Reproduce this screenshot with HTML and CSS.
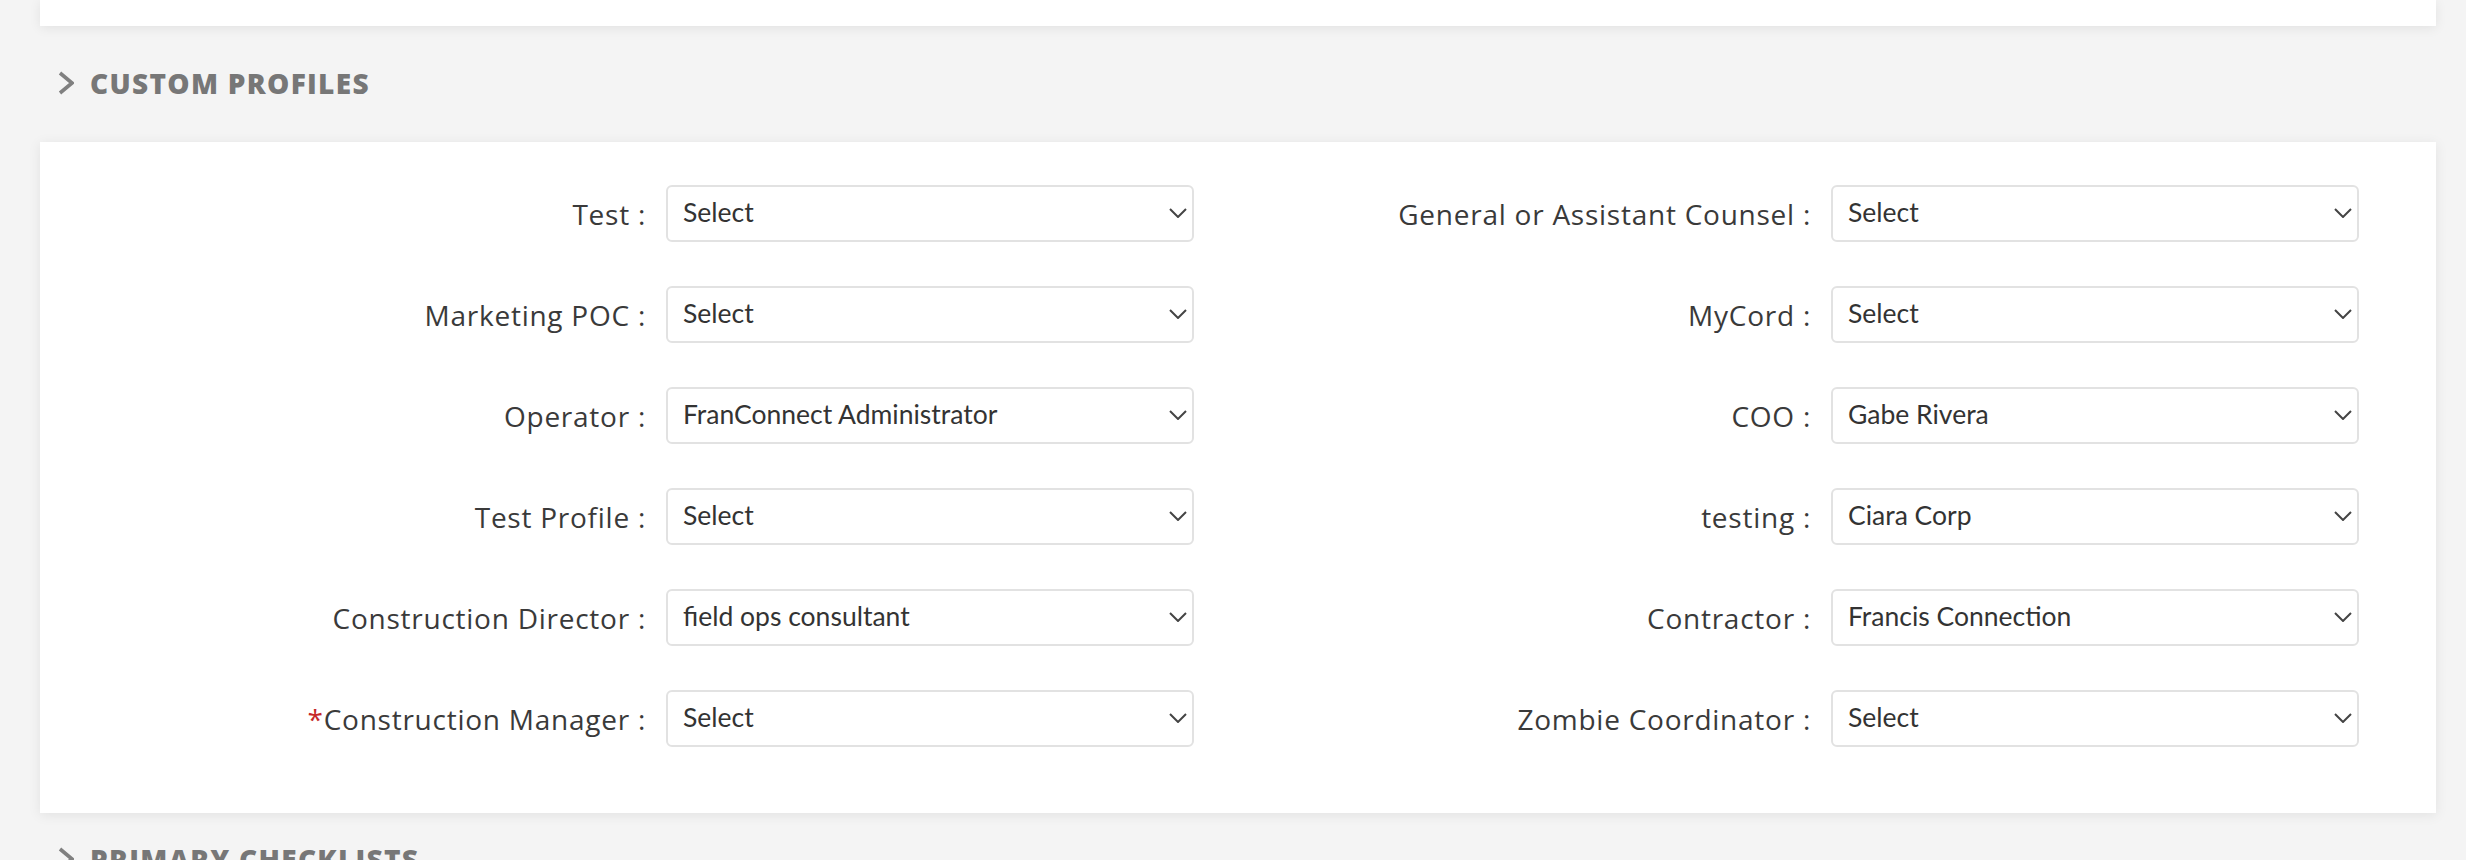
FILE: index.html
```html
<!DOCTYPE html>
<html>

<head>
    <title>Custom Profiles</title>
    <link rel="stylesheet" href="styles.css">
</head>

<body>
    <div class="card card-top"></div>

    <div class="section-head first">
        <svg class="head-chevron" width="16" height="24" viewBox="0 0 16 24">
            <polyline points="2,2 14,12 2,22" fill="none" stroke="#808080" stroke-width="3.6" />
        </svg>
        <span>CUSTOM PROFILES</span>
    </div>

    <div class="card">
        <form class="profile-grid">
            <div class="field">
                <label for="test">Test :</label>
                <div class="select-wrap">
                    <select id="test"><option>Select</option></select>
                    <svg class="caret" width="18" height="10" viewBox="0 0 18 10"><polyline points="1,1 9,9 17,1" fill="none" stroke="#444" stroke-width="2" /></svg>
                </div>
            </div>
            <div class="field">
                <label for="counsel">General or Assistant Counsel :</label>
                <div class="select-wrap">
                    <select id="counsel"><option>Select</option></select>
                    <svg class="caret" width="18" height="10" viewBox="0 0 18 10"><polyline points="1,1 9,9 17,1" fill="none" stroke="#444" stroke-width="2" /></svg>
                </div>
            </div>

            <div class="field">
                <label for="marketingPoc">Marketing POC :</label>
                <div class="select-wrap">
                    <select id="marketingPoc"><option>Select</option></select>
                    <svg class="caret" width="18" height="10" viewBox="0 0 18 10"><polyline points="1,1 9,9 17,1" fill="none" stroke="#444" stroke-width="2" /></svg>
                </div>
            </div>
            <div class="field">
                <label for="myCord">MyCord :</label>
                <div class="select-wrap">
                    <select id="myCord"><option>Select</option></select>
                    <svg class="caret" width="18" height="10" viewBox="0 0 18 10"><polyline points="1,1 9,9 17,1" fill="none" stroke="#444" stroke-width="2" /></svg>
                </div>
            </div>

            <div class="field">
                <label for="operator">Operator :</label>
                <div class="select-wrap">
                    <select id="operator"><option>FranConnect Administrator</option></select>
                    <svg class="caret" width="18" height="10" viewBox="0 0 18 10"><polyline points="1,1 9,9 17,1" fill="none" stroke="#444" stroke-width="2" /></svg>
                </div>
            </div>
            <div class="field">
                <label for="coo">COO :</label>
                <div class="select-wrap">
                    <select id="coo"><option>Gabe Rivera</option></select>
                    <svg class="caret" width="18" height="10" viewBox="0 0 18 10"><polyline points="1,1 9,9 17,1" fill="none" stroke="#444" stroke-width="2" /></svg>
                </div>
            </div>

            <div class="field">
                <label for="testProfile">Test Profile :</label>
                <div class="select-wrap">
                    <select id="testProfile"><option>Select</option></select>
                    <svg class="caret" width="18" height="10" viewBox="0 0 18 10"><polyline points="1,1 9,9 17,1" fill="none" stroke="#444" stroke-width="2" /></svg>
                </div>
            </div>
            <div class="field">
                <label for="testing">testing :</label>
                <div class="select-wrap">
                    <select id="testing"><option>Ciara Corp</option></select>
                    <svg class="caret" width="18" height="10" viewBox="0 0 18 10"><polyline points="1,1 9,9 17,1" fill="none" stroke="#444" stroke-width="2" /></svg>
                </div>
            </div>

            <div class="field">
                <label for="constructionDirector">Construction Director :</label>
                <div class="select-wrap">
                    <select id="constructionDirector"><option>field ops consultant</option></select>
                    <svg class="caret" width="18" height="10" viewBox="0 0 18 10"><polyline points="1,1 9,9 17,1" fill="none" stroke="#444" stroke-width="2" /></svg>
                </div>
            </div>
            <div class="field">
                <label for="contractor">Contractor :</label>
                <div class="select-wrap">
                    <select id="contractor"><option>Francis Connection</option></select>
                    <svg class="caret" width="18" height="10" viewBox="0 0 18 10"><polyline points="1,1 9,9 17,1" fill="none" stroke="#444" stroke-width="2" /></svg>
                </div>
            </div>

            <div class="field">
                <label for="constructionManager"><span class="required">*</span>Construction Manager :</label>
                <div class="select-wrap">
                    <select id="constructionManager"><option>Select</option></select>
                    <svg class="caret" width="18" height="10" viewBox="0 0 18 10"><polyline points="1,1 9,9 17,1" fill="none" stroke="#444" stroke-width="2" /></svg>
                </div>
            </div>
            <div class="field">
                <label for="zombie">Zombie Coordinator :</label>
                <div class="select-wrap">
                    <select id="zombie"><option>Select</option></select>
                    <svg class="caret" width="18" height="10" viewBox="0 0 18 10"><polyline points="1,1 9,9 17,1" fill="none" stroke="#444" stroke-width="2" /></svg>
                </div>
            </div>
        </form>
    </div>

    <div class="section-head">
        <svg class="head-chevron" width="16" height="24" viewBox="0 0 16 24">
            <polyline points="2,2 14,12 2,22" fill="none" stroke="#808080" stroke-width="3.6" />
        </svg>
        <span>PRIMARY CHECKLISTS</span>
    </div>
</body>

</html>
```

FILE: styles.css
```css
body {
    margin: 0;
    padding: 0 30px 0 40px;
    background-color: #f4f4f4;
    font-family: 'Open Sans', 'Noto Sans', sans-serif;
    color: #333;
    overflow: hidden;
}

.card {
    background-color: white;
    box-shadow: 0 2px 12px rgba(0, 0, 0, 0.08);
}

.card-top {
    height: 26px;
}

/* collapsible section titles */
.section-head {
    display: flex;
    align-items: center;
    gap: 16px;
    margin: 26px 0 0 18px;
    height: 40px;
    color: #777;
    font-size: 28px;
    font-weight: 800;
    letter-spacing: 1.3px;
}

.section-head.first {
    margin: 37px 0 39px 18px;
}

.head-chevron {
    flex: none;
}

.profile-grid {
    display: grid;
    grid-template-columns: 1fr 1fr;
    row-gap: 44px;
    padding: 43px 66px 66px 0;
    margin: 0;
}

.field {
    display: grid;
    grid-template-columns: 1fr 528px;
    column-gap: 20px;
    align-items: center;
    padding-right: 11px;
}

label {
    text-align: right;
    font-size: 28px;
    letter-spacing: 0.75px;
    color: #3a3a3a;
    white-space: nowrap;
}

.required {
    color: #c62828;
}

.select-wrap {
    position: relative;
}

select {
    display: block;
    width: 100%;
    height: 57px;
    padding: 0 40px 3px 15px;
    border: 2px solid #e2e2e2;
    border-radius: 6px;
    background-color: white;
    font-family: 'Lato', sans-serif;
    font-size: 26.5px;
    color: #333;
    appearance: none;
    -webkit-appearance: none;
}

.caret {
    position: absolute;
    right: 7px;
    top: 23px;
    pointer-events: none;
}
```
